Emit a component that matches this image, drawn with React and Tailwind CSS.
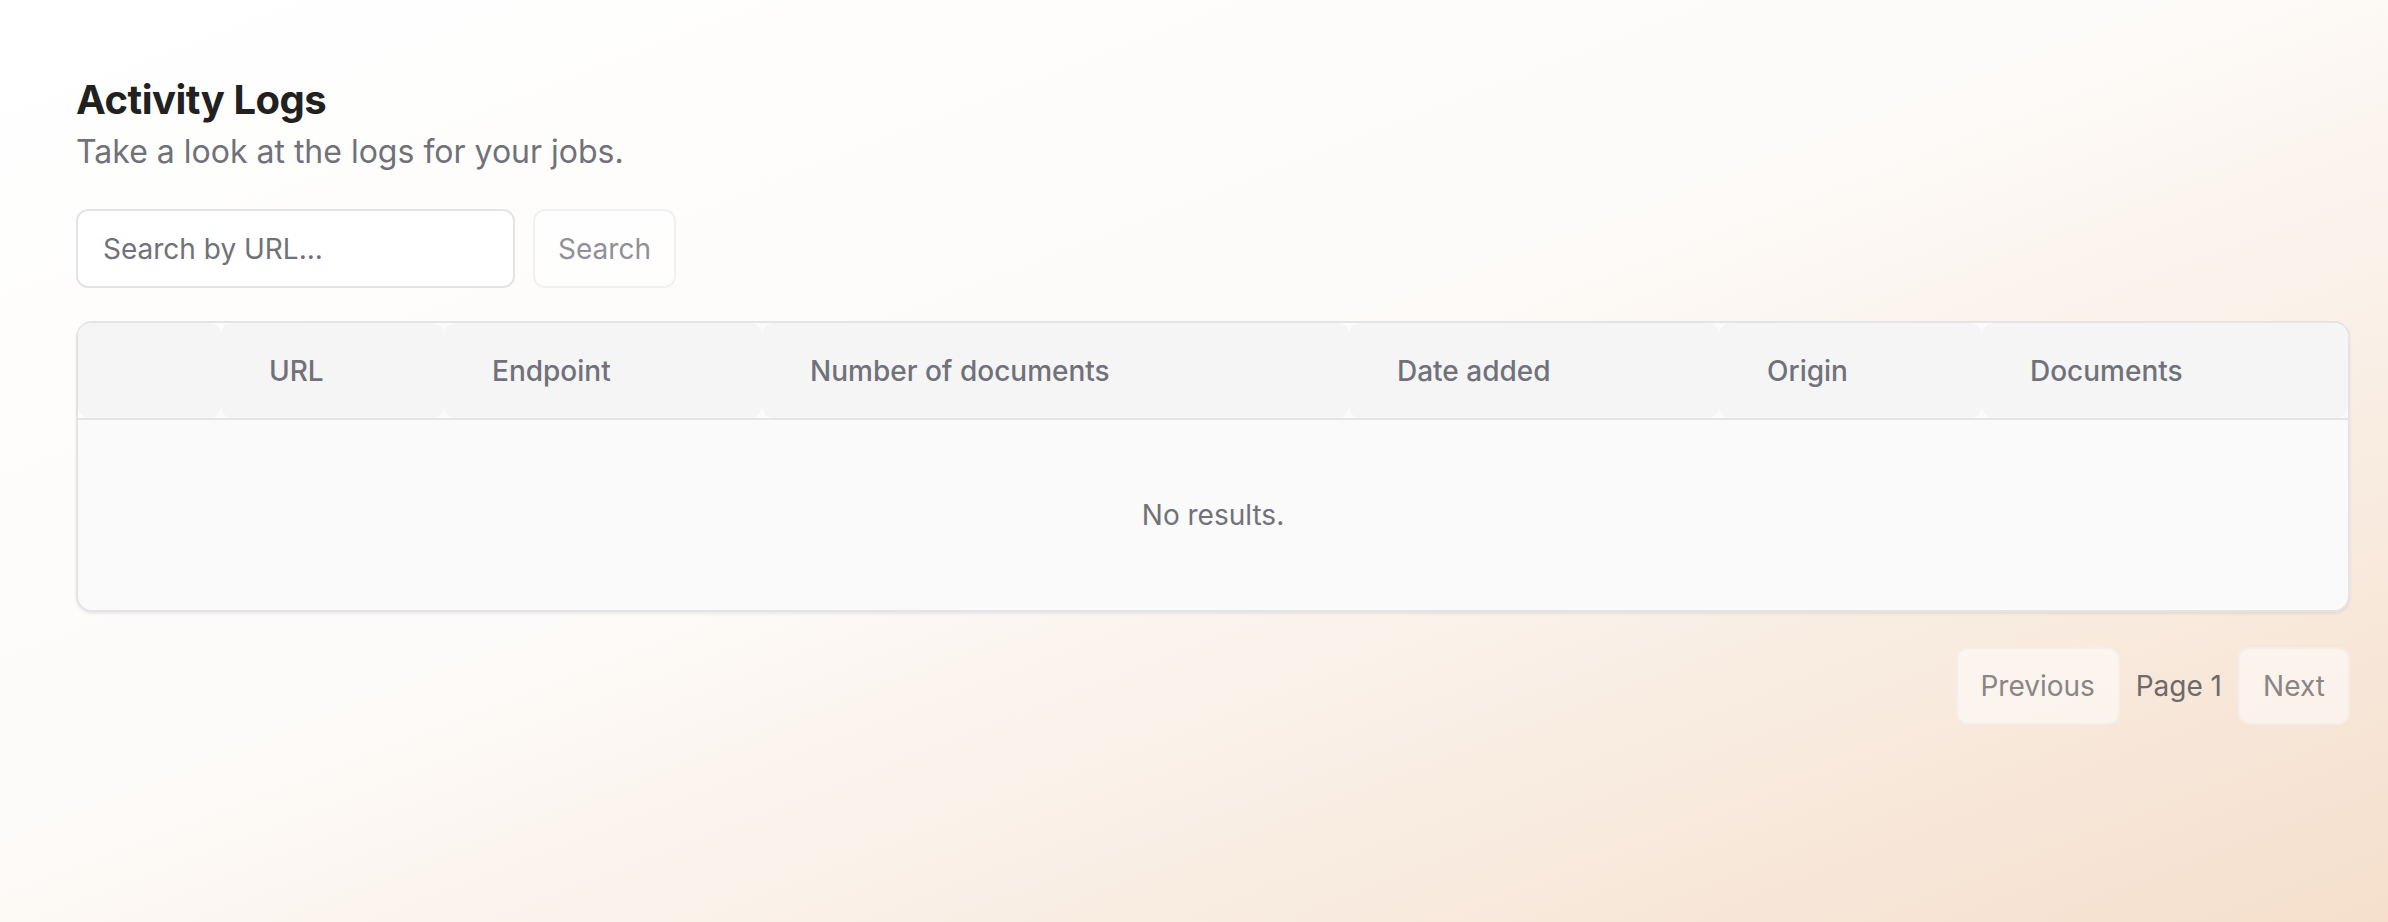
export default function App() {
  const columns = ["", "URL", "Endpoint", "Number of documents", "Date added", "Origin", "Documents"];

  return (
    <div className="min-h-[922px] w-full bg-[linear-gradient(to_bottom_right,#ffffff_0%,#fdfbf9_45%,#f5dfcc_100%)] pl-[76px] pr-[38px] pt-[72px] font-['Inter',sans-serif]">
      {/* Header */}
      <h1 className="text-[40px] font-bold leading-[56px] tracking-[-0.5px] text-[#212121]">Activity Logs</h1>
      <p className="text-[32px] leading-[48px] text-[#71717a]">Take a look at the logs for your jobs.</p>

      {/* Search */}
      <div className="mt-[33px] flex items-center gap-[18px]">
        <div className="flex h-[79px] w-[439px] items-center rounded-[12px] border-2 border-[#e4e4e7] bg-white px-[25px] text-[28px] text-[#71717a]">
          Search by URL...
        </div>
        <button className="h-[79px] w-[143px] rounded-[12px] border-2 border-[#f1f1f2] bg-white/60 text-[28px] text-[#909097]">
          Search
        </button>
      </div>

      {/* Table */}
      <div className="mt-[33px] overflow-hidden rounded-[16px] border-2 border-[#e4e4e7] bg-[#fafafa] shadow-[0_2px_3px_rgba(0,0,0,0.07)]">
        <div className="grid h-[95px] grid-cols-[143px_223px_318px_587px_370px_263px_1fr] bg-[#fbfbfb]">
          {columns.map((c, i) => (
            <div
              key={i}
              className="flex items-center rounded-[12px] bg-[#f5f5f5] pl-12 text-[28px] font-medium text-[#71717a]"
            >
              {c}
            </div>
          ))}
        </div>
        <div className="flex h-[192px] items-center justify-center border-t-2 border-[#e4e4e7] text-[28px] text-[#71717a]">
          No results.
        </div>
      </div>

      {/* Pagination */}
      <div className="mt-[35px] flex items-center justify-end gap-4">
        <button className="h-[78px] w-[164px] rounded-[12px] border-2 border-[#f6ede7] bg-white/50 text-[28px] text-[#8b8585]">
          Previous
        </button>
        <span className="text-[28px] text-[#6e6a6a]">Page 1</span>
        <button className="h-[78px] w-[112px] rounded-[12px] border-2 border-[#f6ede7] bg-white/50 text-[28px] text-[#8b8585]">
          Next
        </button>
      </div>
    </div>
  );
}
